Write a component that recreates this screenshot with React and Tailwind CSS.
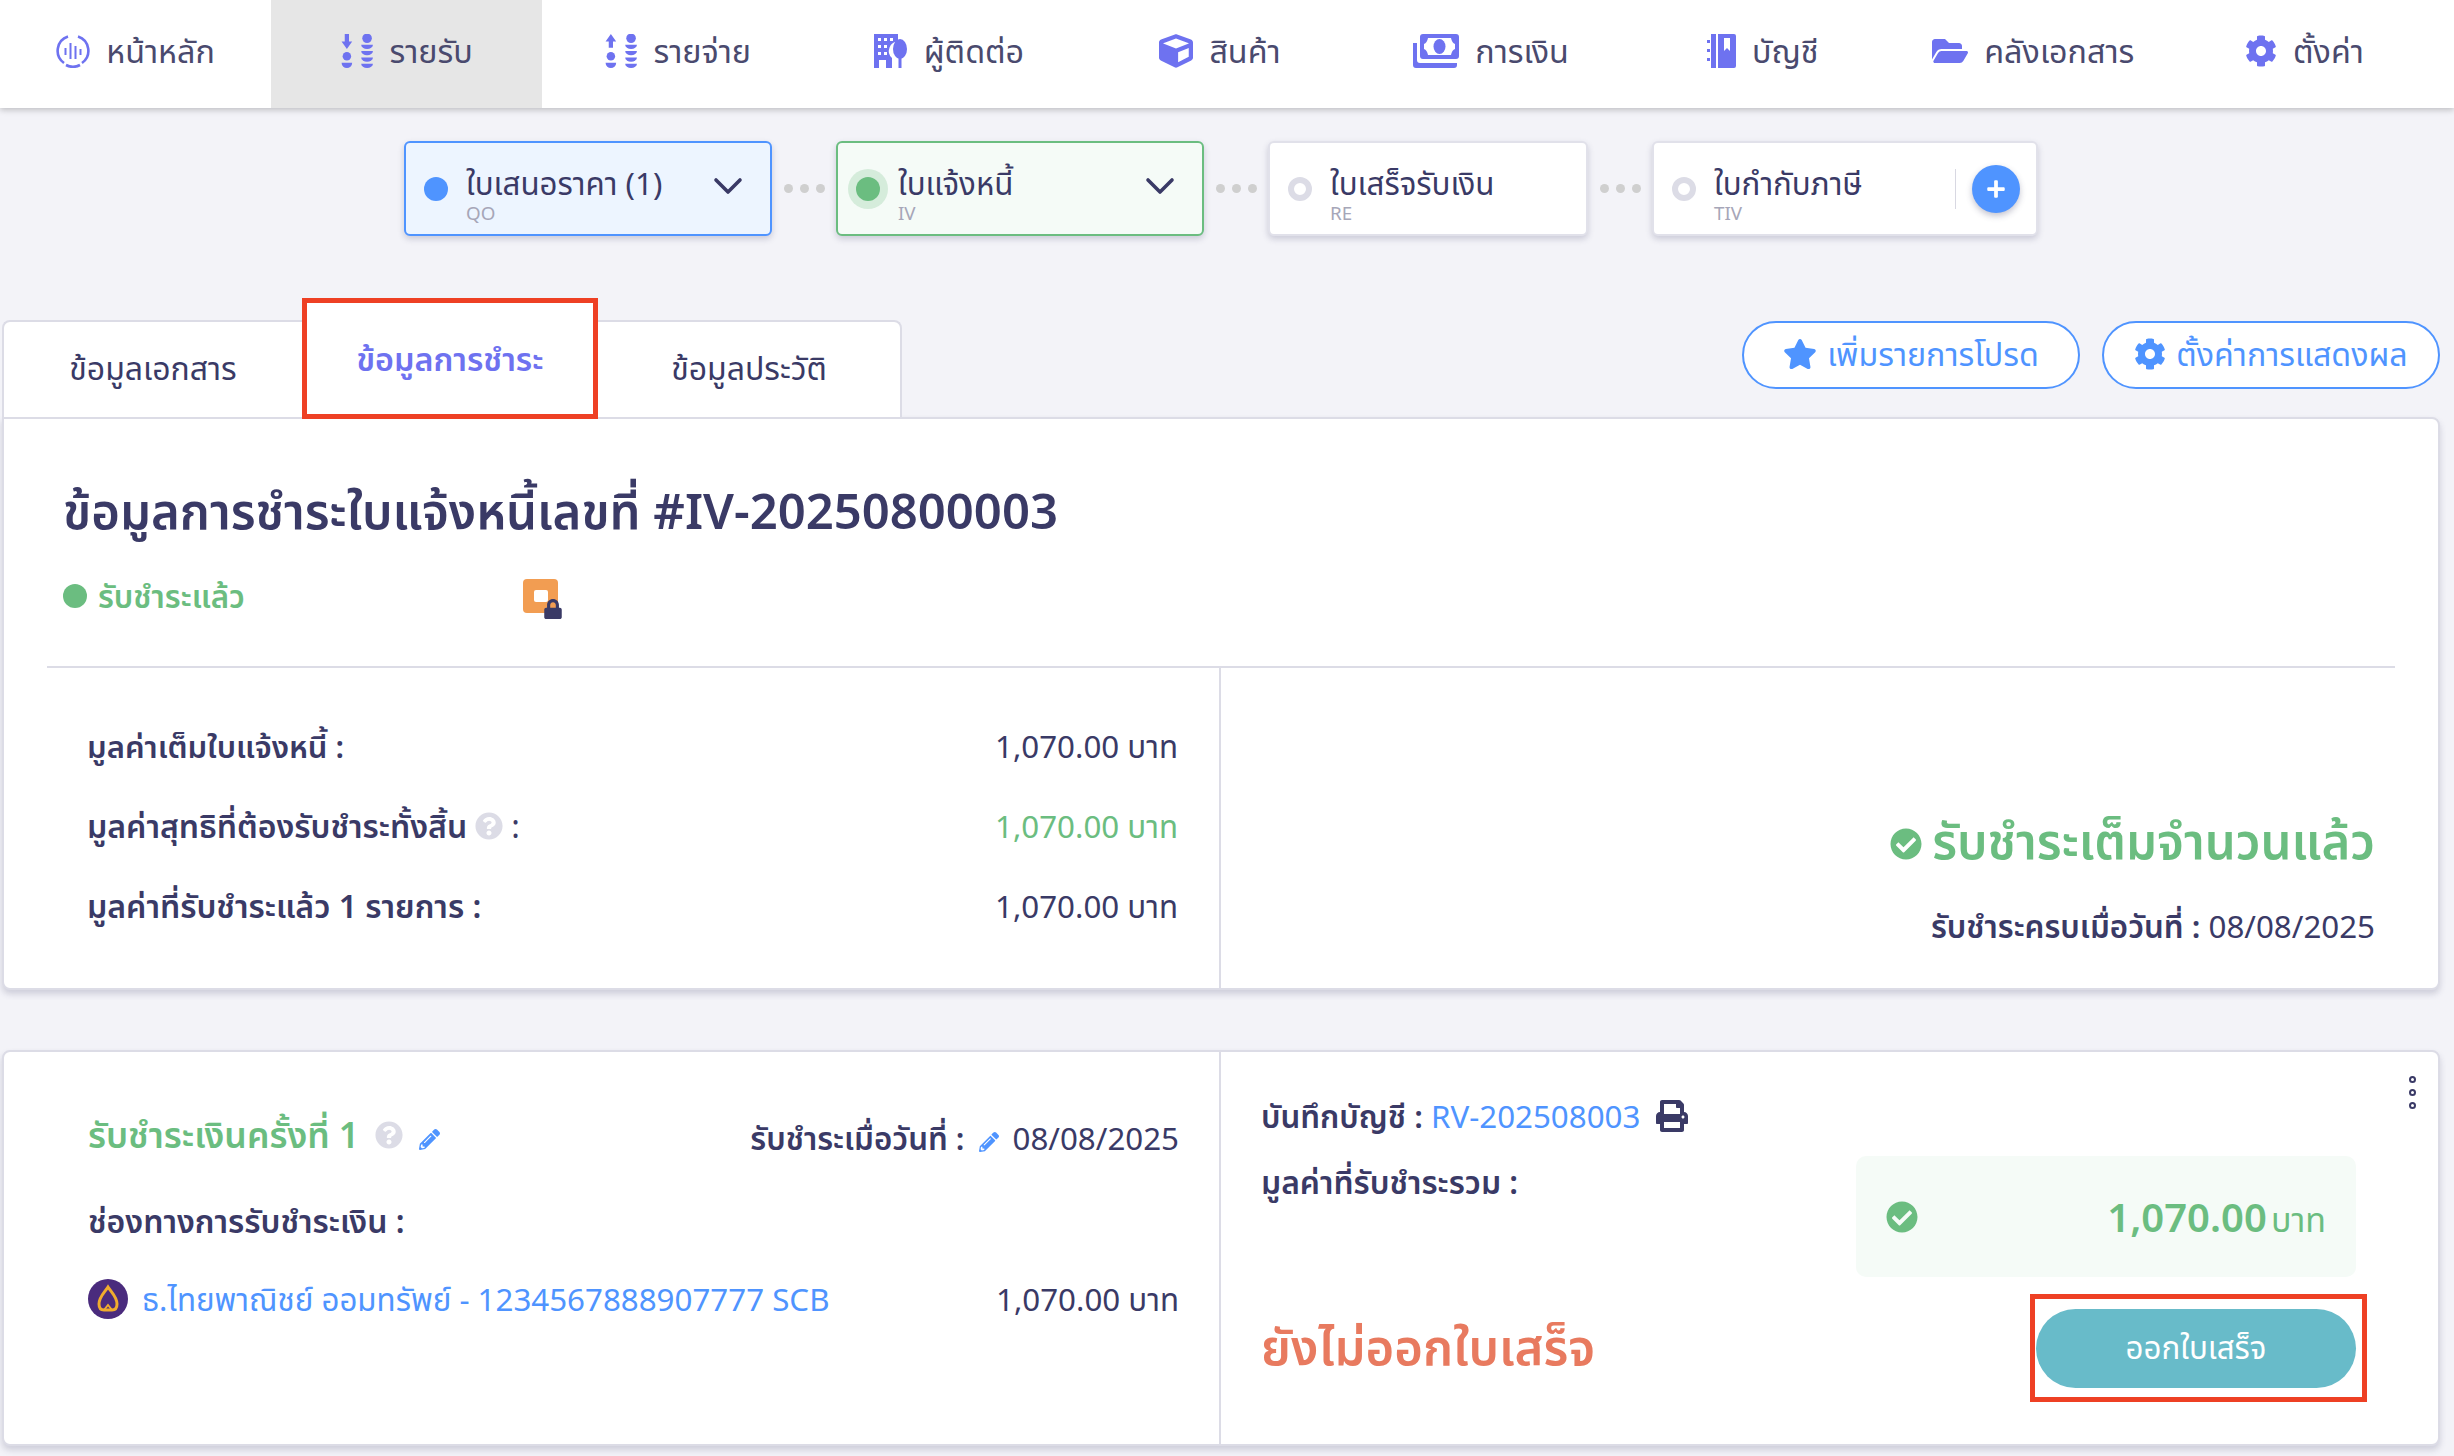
import React from "react";
import { FaStar, FaCog, FaPrint, FaCube, FaFolderOpen, FaPencilAlt, FaCheckCircle, FaQuestionCircle, FaPlus, FaLock } from "react-icons/fa";

const font = { fontFamily: '"Noto Sans","Noto Sans Thai","Noto Sans CJK SC",sans-serif' };

function Coins({ up }) {
  return (
    <svg viewBox="0 0 30 32" className="w-[33px] h-[34px] text-[#6e72f0]" fill="currentColor">
      <path d={up ? "M5 0 L10 7 H7 V13 H3 V7 H0 Z" : "M3 0 H7 V7 H10 L5 14 L0 7 H3 Z"} />
      <circle cx="5" cy="21" r="4" />
      <path d="M0 27 H10 A5 5 0 0 1 0 27 Z" />
      <circle cx="24" cy="4" r="4.5" />
      <path d="M18.5 10 H29.5 A5.5 4 0 0 1 18.5 10 Z" />
      <path d="M18.5 16 H29.5 A5.5 4 0 0 1 18.5 16 Z" />
      <path d="M18.5 22 H29.5 A5.5 4 0 0 1 18.5 22 Z" />
      <path d="M18.5 28 H29.5 A5.5 4 0 0 1 18.5 28 Z" />
    </svg>
  );
}

function Dash() {
  return (
    <svg viewBox="0 0 34 34" className="w-[34px] h-[34px] text-[#6e72f0]" fill="none" stroke="currentColor" strokeWidth="2.6">
      <path d="M12 2.5 A15 15 0 0 0 8 29" />
      <path d="M22 2.5 A15 15 0 0 1 26 29" />
      <path d="M10 31 A15 15 0 0 0 24 31" />
      <path d="M9.5 14V21 M14.5 9V25 M19.5 12V25 M24.5 15V21" strokeWidth="2" />
    </svg>
  );
}

function Contact() {
  return (
    <svg viewBox="0 0 34 34" className="w-[34px] h-[34px] text-[#6e72f0]" fill="currentColor">
      <path fillRule="evenodd" d="M0 0 H24 V8 A8 9 0 0 0 18 24 V34 H0 Z M4 4 H7 V7 H4 Z M10 4 H13 V7 H10 Z M16 4 H19 V7 H16 Z M4 11 H7 V14 H4 Z M10 11 H13 V14 H10 Z M4 18 H7 V21 H4 Z M10 18 H13 V21 H10 Z M5 26 H12 V34 H5 Z" />
      <ellipse cx="26" cy="15" rx="7" ry="10" />
      <rect x="24.5" y="24" width="3" height="10" />
    </svg>
  );
}

function Money() {
  return (
    <svg viewBox="0 0 46 34" className="w-[46px] h-[34px] text-[#6e72f0]" fill="currentColor">
      <path fillRule="evenodd" d="M10 0 H43 Q46 0 46 3 V22 Q46 25 43 25 H10 Q7 25 7 22 V3 Q7 0 10 0 Z M15 4 Q14 9 11 10 V15 Q14 16 15 21 H38 Q39 16 42 15 V10 Q39 9 38 4 Z" />
      <ellipse cx="26.5" cy="12.5" rx="6" ry="7.5" />
      <path d="M0 9 H4 V26 Q4 29 7 29 H44 V31 Q44 34 41 34 H3 Q0 34 0 31 Z" />
    </svg>
  );
}

function Book() {
  return (
    <svg viewBox="0 0 30 34" className="w-[30px] h-[34px] text-[#6e72f0]" fill="currentColor">
      <path fillRule="evenodd" d="M5 0 H10 V34 H5 Z M12 0 H28 Q30 0 30 2 V32 Q30 34 28 34 H12 Z M18 4 V17 L21 14 L24 17 V4 Z" />
      <rect x="1" y="6" width="3" height="3" />
      <rect x="1" y="15" width="3" height="3" />
      <rect x="1" y="24" width="3" height="3" />
    </svg>
  );
}

const navIcon = "text-[#6e72f0]";
const navItems = [
  { t: "หน้าหลัก", i: <Dash /> },
  { t: "รายรับ", i: <Coins />, active: true },
  { t: "รายจ่าย", i: <Coins up /> },
  { t: "ผู้ติดต่อ", i: <Contact /> },
  { t: "สินค้า", i: <FaCube className={`${navIcon} text-[34px]`} /> },
  { t: "การเงิน", i: <Money /> },
  { t: "บัญชี", i: <Book /> },
  { t: "คลังเอกสาร", i: <FaFolderOpen className={`${navIcon} text-[36px]`} /> },
  { t: "ตั้งค่า", i: <FaCog className={`${navIcon} text-[32px]`} /> },
];

function Nav() {
  return (
    <nav className="relative z-10 flex h-[108px] pr-[14px] bg-white shadow-[0_2px_6px_rgba(0,0,0,0.22)]">
      {navItems.map((n) => (
        <div key={n.t} className={`flex-1 flex items-center justify-center gap-[16px] pb-[7px] ${n.active ? "bg-[#e6e6e6]" : ""}`}>
          {n.i}
          <span className="text-[32.3px] leading-none text-[#4a4a6e]">{n.t}</span>
        </div>
      ))}
    </nav>
  );
}

function Step({ title, sub, w, tone, chevron, plus }) {
  const box = tone === "blue" ? "bg-[#edf5ff] border-[#4f94ff]" : tone === "green" ? "bg-[#f5fbf7] border-[#6bbd80]" : "bg-white border-[#e1e1ea]";
  return (
    <div className={`relative flex items-center h-[95px] rounded-[6px] border-2 shadow-[0_3px_6px_rgba(60,60,100,0.22)] ${box} ${w}`}>
      <div className="w-[60px] flex justify-center shrink-0">
        {tone === "blue" && <span className="w-[24px] h-[24px] rounded-full bg-[#4f94ff]" />}
        {tone === "green" && (
          <span className="w-[40px] h-[40px] rounded-full bg-[#d5ecdb] flex items-center justify-center">
            <span className="w-[24px] h-[24px] rounded-full bg-[#6bbd80]" />
          </span>
        )}
        {!tone && <span className="w-[24px] h-[24px] rounded-full border-[6px] border-[#dcdce6] bg-white" />}
      </div>
      <div className="flex flex-col flex-1 min-w-0 pt-[10px]">
        <span className="text-[31.3px] leading-[38px] text-[#3a3a66] whitespace-nowrap">{title}</span>
        <span className="text-[18.8px] leading-[20px] mt-[1px] text-[#a6a6b8]">{sub}</span>
      </div>
      {chevron && (
        <svg viewBox="0 0 30 18" className="w-[30px] h-[18px] mr-[27px] mb-[5px] text-[#3a3a66]" fill="none" stroke="currentColor" strokeWidth="3.6" strokeLinecap="round" strokeLinejoin="round">
          <path d="M3 3 L15 15 L27 3" />
        </svg>
      )}
      {plus && (
        <div className="flex items-center mr-[16px]">
          <span className="w-px h-[40px] bg-[#d8d8e2] mr-[16px]" />
          <span className="w-[48px] h-[48px] rounded-full bg-[#4f94ff] flex items-center justify-center text-white text-[20px] shadow-[0_3px_6px_rgba(60,60,100,0.3)]"><FaPlus /></span>
        </div>
      )}
    </div>
  );
}

function Dots() {
  return (
    <div className="w-[64px] flex justify-center gap-[7px]">
      {[0, 1, 2].map((i) => <span key={i} className="w-[9px] h-[9px] rounded-full bg-[#cfcfcf]" />)}
    </div>
  );
}

function Stepper() {
  return (
    <div className="flex items-center justify-start pl-[404px] pt-[33px]">
      <Step title="ใบเสนอราคา (1)" sub="QO" w="w-[368px]" tone="blue" chevron />
      <Dots />
      <Step title="ใบแจ้งหนี้" sub="IV" w="w-[368px]" tone="green" chevron />
      <Dots />
      <Step title="ใบเสร็จรับเงิน" sub="RE" w="w-[320px]" />
      <Dots />
      <Step title="ใบกำกับภาษี" sub="TIV" w="w-[386px]" plus />
    </div>
  );
}

function Tabs() {
  const pill = "h-[68px] w-[338px] rounded-full border-2 border-[#4f94ff] bg-white flex items-center justify-center gap-[10px] pb-[2px] text-[#4f94ff] text-[32.2px] leading-none";
  return (
    <div className="flex items-end justify-between pl-[2px] pr-[14px] mt-[84px] h-[97px] relative z-10">
      <div className="flex h-[97px] relative">
        <div className="w-[300px] bg-white border-2 border-b-0 border-[#dcdce6] border-r-0 rounded-tl-[8px] flex items-center justify-center pb-[4px] text-[32px] text-[#3a3a66]">ข้อมูลเอกสาร</div>
        <div className="relative w-[296px] bg-white flex items-center justify-center">
          <div className="absolute left-0 right-0 top-[-22px] bottom-[-2px] border-[5px] border-[#ee4024] bg-white flex items-center justify-center">
            <span className="text-[32.3px] font-semibold text-[#6e72f0]">ข้อมูลการชำระ</span>
          </div>
        </div>
        <div className="w-[304px] bg-white border-2 border-b-0 border-[#dcdce6] border-l-0 rounded-tr-[8px] flex items-center justify-center pb-[4px] text-[32px] text-[#3a3a66]">ข้อมูลประวัติ</div>
      </div>
      <div className="flex gap-[22px] self-start mt-[1px]">
        <div className={pill}><FaStar className="text-[34px]" /><span>เพิ่มรายการโปรด</span></div>
        <div className={pill}><FaCog className="text-[32px]" />ตั้งค่าการแสดงผล</div>
      </div>
    </div>
  );
}

function Baht({ green }) {
  return (
    <span className={`text-[31.3px] ${green ? "text-[#6bbd80]" : "text-[#3a3a66]"}`}>1,070.00 บาท</span>
  );
}

function Row({ label, green, help, size }) {
  return (
    <div className="flex items-center justify-between h-[80px]">
      <span className={`font-semibold text-[#3a3a66] flex items-center gap-[8px] ${size}`}>
        {label}
        {help && <FaQuestionCircle className="text-[#dcdce6] text-[28px]" />}
        {help && <span className="font-normal">:</span>}
      </span>
      <Baht green={green} />
    </div>
  );
}

function SummaryCard() {
  return (
    <section className="mx-[2px] mr-[14px] h-[573px] bg-white border-2 border-[#dcdce6] rounded-b-[8px] rounded-tr-[8px] shadow-[0_4px_6px_rgba(60,60,100,0.2)] flex flex-col">
      <div className="px-[59px] pt-[60px] h-[247px] shrink-0">
        <h1 className="text-[49px] leading-[62px] font-semibold text-[#3a3a66] whitespace-nowrap">ข้อมูลการชำระใบแจ้งหนี้เลขที่ #IV-20250800003</h1>
        <div className="flex items-center mt-[34px] h-[42px]">
          <span className="w-[24px] h-[24px] rounded-full bg-[#6bbd80] shrink-0" />
          <span className="ml-[11px] w-[425px] text-[31.3px] font-semibold text-[#6bbd80]">รับชำระแล้ว</span>
          <div className="relative w-[40px] h-[40px] mt-[6px]">
            <div className="w-[35px] h-[34px] rounded-[4px] bg-[#f29d52] flex items-center justify-center">
              <span className="w-[14px] h-[12px] rounded-[2px] bg-white" />
            </div>
            <FaLock className="absolute right-0 bottom-0 text-[20px] text-[#3a3a66]" />
          </div>
        </div>
      </div>
      <div className="flex flex-1 ml-[43px] mr-[43px] border-t-2 border-[#dcdce6]">
        <div className="w-[1174px] shrink-0 pl-[40px] pr-[41px] pt-[38px] border-r-2 border-[#dcdce6] -mb-px">
          <Row label="มูลค่าเต็มใบแจ้งหนี้ :" size="text-[31px]" />
          <Row label="มูลค่าสุทธิที่ต้องรับชำระทั้งสิ้น" green help size="text-[32px]" />
          <Row label="มูลค่าที่รับชำระแล้ว 1 รายการ :" size="text-[32px]" />
        </div>
        <div className="flex-1 flex flex-col items-end justify-end pb-[40px] pr-[20px]">
          <div className="flex items-center gap-[10px] text-[49px] leading-[60px] font-semibold text-[#6bbd80]">
            <FaCheckCircle className="text-[32px] mt-[8px]" /><span>รับชำระเต็มจำนวนแล้ว</span>
          </div>
          <div className="mt-[34px] text-[31.3px] leading-[44px] text-[#3a3a66]"><span className="font-semibold">รับชำระครบเมื่อวันที่ :</span> 08/08/2025</div>
        </div>
      </div>
    </section>
  );
}

function Scb() {
  return (
    <svg viewBox="0 0 40 40" className="w-[40px] h-[40px] shrink-0">
      <circle cx="20" cy="20" r="20" fill="#4a2b7d" />
      <path d="M20 8 C24 14 29 18 29 25 C29 29 27 31 24 31 H16 C13 31 11 29 11 25 C11 18 16 14 20 8 Z" fill="none" stroke="#f0ac2e" strokeWidth="3" />
      <path d="M16 31 L20 26 L24 31" fill="none" stroke="#f0ac2e" strokeWidth="2" />
    </svg>
  );
}

function PaymentCard() {
  return (
    <section className="relative mt-[60px] mx-[2px] mr-[14px] h-[396px] bg-white border-2 border-[#dcdce6] rounded-[8px] shadow-[0_4px_6px_rgba(60,60,100,0.2)] flex">
      <div className="w-[1217px] shrink-0 pl-[84px] pr-[40px] pt-[53px] border-r-2 border-[#dcdce6]">
        <div className="flex items-center justify-between h-[60px]">
          <div className="flex items-center gap-[16px]">
            <span className="text-[35.5px] font-semibold text-[#6bbd80]">รับชำระเงินครั้งที่ 1</span>
            <FaQuestionCircle className="text-[#dcdce6] text-[28px]" />
            <FaPencilAlt className="text-[#4f94ff] text-[21px] mt-[8px]" />
          </div>
          <div className="flex items-center gap-[14px] text-[31.3px] text-[#3a3a66] mt-[7px]">
            <span className="font-semibold">รับชำระเมื่อวันที่ :</span>
            <FaPencilAlt className="text-[#4f94ff] text-[20px] mt-[6px]" />
            <span>08/08/2025</span>
          </div>
        </div>
        <div className="mt-[26px] text-[32px] leading-[60px] font-semibold text-[#3a3a66]">ช่องทางการรับชำระเงิน :</div>
        <div className="mt-[18px] flex items-center justify-between h-[60px]">
          <div className="flex items-center gap-[14px]">
            <Scb />
            <span className="text-[#4f94ff] text-[31.3px]">ธ.ไทยพาณิชย์ ออมทรัพย์ - 1234567888907777 SCB</span>
          </div>
          <Baht />
        </div>
      </div>
      <div className="flex-1 relative pl-[40px] pr-[82px] pt-[41px]">
        <div className="flex items-center gap-[16px] h-[46px] text-[31.3px] text-[#3a3a66]">
          <span><span className="font-semibold">บันทึกบัญชี :</span> <span className="text-[#4f94ff]">RV-202508003</span></span>
          <FaPrint className="text-[32px]" />
        </div>
        <div className="flex justify-between">
          <span className="text-[31.8px] font-semibold text-[#3a3a66] mt-[20px] leading-[46px]">มูลค่าที่รับชำระรวม :</span>
          <div className="mt-[17px] w-[500px] h-[121px] rounded-[10px] bg-[#f5fbf7] flex items-center justify-between px-[30px] text-[#6bbd80]">
            <FaCheckCircle className="text-[32px]" />
            <span><span className="text-[40px] font-semibold">1,070.00</span> <span className="text-[34px]">บาท</span></span>
          </div>
        </div>
        <div className="flex items-center justify-between mt-[32px]">
          <span className="text-[49px] font-semibold text-[#e87a5f] -mt-[3px]">ยังไม่ออกใบเสร็จ</span>
          <div className="relative w-[320px] h-[79px] rounded-full bg-[#68bbc9] flex items-center justify-center pb-[2px] text-white text-[31.3px]">
            ออกใบเสร็จ
            <div className="absolute left-[-6px] right-[-11px] top-[-15px] bottom-[-14px] border-[5px] border-[#ee4024]" />
          </div>
        </div>
        <div className="absolute right-[22px] top-[24px] flex flex-col gap-[6px]">
          {[0, 1, 2].map((i) => <span key={i} className="w-[7px] h-[7px] rounded-full border-2 border-[#3a3a66]" />)}
        </div>
      </div>
    </section>
  );
}

export default function App() {
  return (
    <div className="w-[2454px] h-[1456px] overflow-hidden bg-[#f3f3f8]" style={font}>
      <Nav />
      <Stepper />
      <Tabs />
      <SummaryCard />
      <PaymentCard />
    </div>
  );
}
